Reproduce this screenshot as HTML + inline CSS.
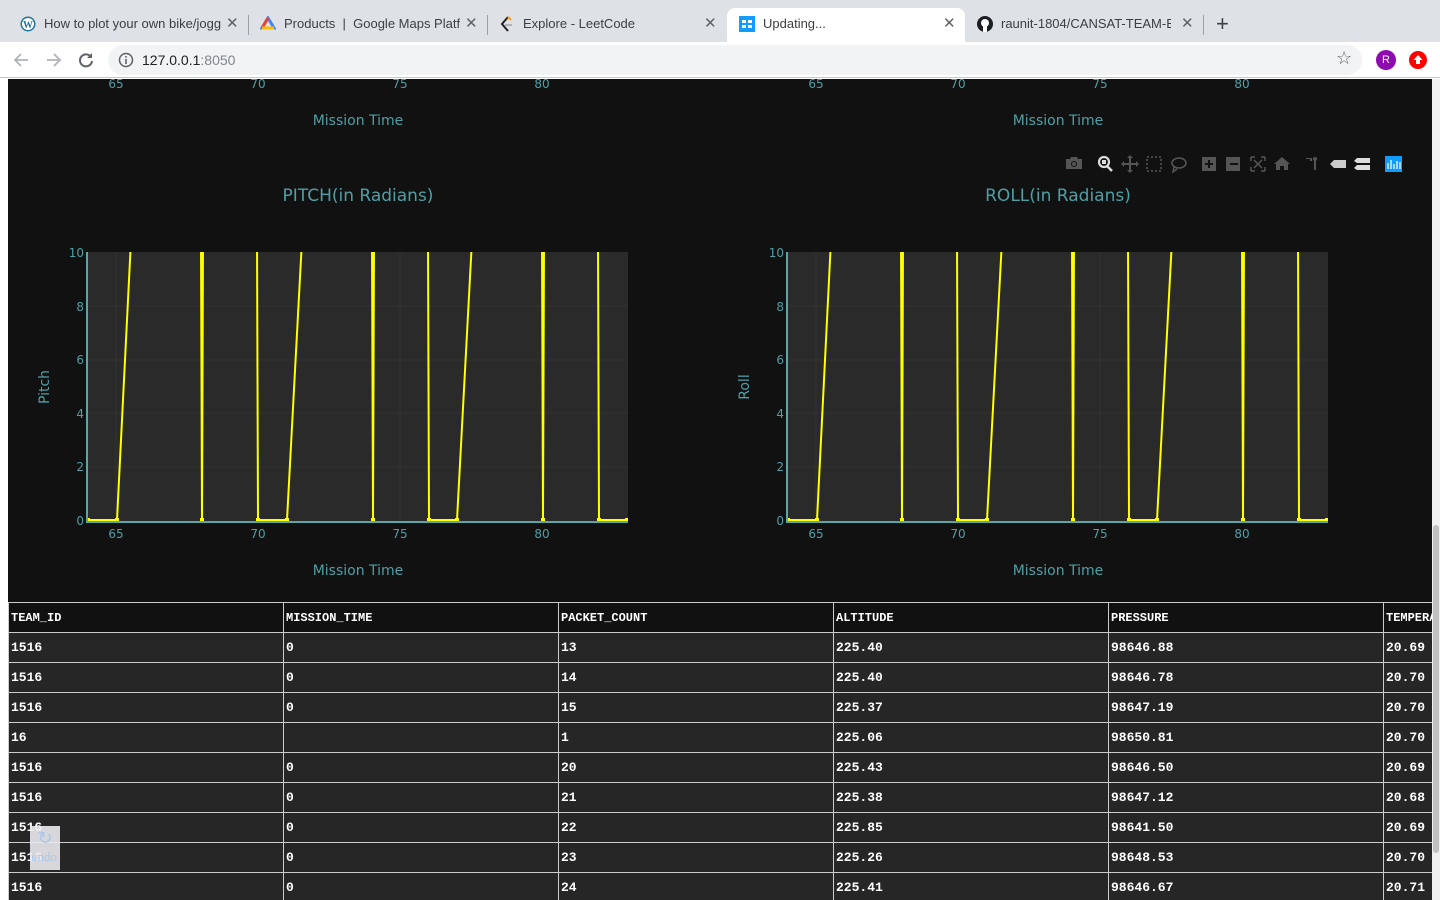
<!DOCTYPE html>
<html><head><meta charset="utf-8"><style>
*{margin:0;padding:0;box-sizing:border-box}
body{width:1440px;height:900px;overflow:hidden;background:#fff;font-family:"Liberation Sans",sans-serif;position:relative}
.tabs{position:absolute;left:0;top:0;width:1440px;height:42px;background:#dee1e6}
.tab{position:absolute;top:8px;height:34px;font-size:13px;color:#3c4043;line-height:32px}
.tab .ic{position:absolute;left:12px;top:8px;width:16px;height:16px}
.tab .t{position:absolute;left:36px;top:0;white-space:nowrap;overflow:hidden}
.tab .x{position:absolute;top:0;font-size:15px;color:#5f6368}
.sep{position:absolute;top:15px;width:1px;height:20px;background:#9aa0a6}
.active{background:#fff;border-radius:8px 8px 0 0}
.nav{position:absolute;top:42px;left:0;width:1440px;height:36px;background:#fff;border-bottom:1px solid #c8c8c8}
.omni{position:absolute;left:108px;top:3px;width:1254px;height:30px;border-radius:15px;background:#f1f3f4}
.main{position:absolute;left:8px;top:79px;width:1424px;height:821px;background:#111}
.sb{position:absolute;left:1432px;top:79px;width:8px;height:821px;background:#f1f1f1}
.thumb{position:absolute;left:1433px;top:525px;width:6px;height:328px;background:#c1c1c1;border-radius:3px}
.tw{position:absolute;left:8px;top:602px;width:1424px;height:298px;overflow:hidden}
table{border-collapse:collapse;font-family:"Liberation Mono",monospace;font-weight:bold;font-size:13px;color:#fff;table-layout:fixed;width:1650px}
td{width:275px;height:30px;border:1px solid #ccc;padding:0 2px;background:#262626;white-space:nowrap;overflow:hidden;vertical-align:middle}
tr.h td{background:#111;font-size:12px}
</style></head><body>
<div class="tabs">
 <div class="tab" style="left:8px;width:240px">
  <svg class="ic" viewBox="0 0 16 16"><circle cx="8" cy="8" r="7.5" fill="#21759b"/><circle cx="8" cy="8" r="6" fill="#fff"/><text x="8" y="12" font-size="10" font-weight="bold" text-anchor="middle" fill="#21759b" font-family="Liberation Serif">W</text></svg>
  <span class="t" style="width:178px">How to plot your own bike/jogg</span><span class="x" style="left:218px">✕</span></div>
 <div class="sep" style="left:248px"></div>
 <div class="tab" style="left:248px;width:240px">
  <svg class="ic" viewBox="0 0 16 16"><path d="M8 2 L14 12 H2 Z" fill="none" stroke="#4285f4" stroke-width="3"/><path d="M8 2 L2 12" stroke="#ea4335" stroke-width="3"/><path d="M2 12 H14" stroke="#fbbc04" stroke-width="3"/></svg>
  <span class="t" style="width:176px">Products &nbsp;|&nbsp; Google Maps Platfo</span><span class="x" style="left:217px">✕</span></div>
 <div class="sep" style="left:487px"></div>
 <div class="tab" style="left:487px;width:240px">
  <svg class="ic" viewBox="0 0 16 16"><path d="M9 1 L3 8 L9 15" fill="none" stroke="#222" stroke-width="2"/><path d="M6 9 H13" stroke="#b3b3b3" stroke-width="2"/><path d="M9 1 L12 4" stroke="#f89f1b" stroke-width="2"/></svg>
  <span class="t">Explore - LeetCode</span><span class="x" style="left:217px">✕</span></div>
 <div class="tab active" style="left:727px;width:238px">
  <svg class="ic" viewBox="0 0 16 16"><rect width="16" height="16" fill="#119dff"/><rect x="3" y="4" width="4" height="3" fill="#fff"/><rect x="9" y="4" width="4" height="3" fill="#fff"/><rect x="3" y="9" width="4" height="3" fill="#fff"/><rect x="9" y="9" width="4" height="3" fill="#fff"/></svg>
  <span class="t">Updating...</span><span class="x" style="left:216px">✕</span></div>
 <div class="tab" style="left:965px;width:240px">
  <svg class="ic" viewBox="0 0 16 16"><circle cx="8" cy="8" r="8" fill="#1b1f23"/><circle cx="8" cy="7" r="4" fill="#fff"/><rect x="6" y="10" width="4" height="6" fill="#fff"/></svg>
  <span class="t" style="width:170px">raunit-1804/CANSAT-TEAM-B.</span><span class="x" style="left:216px">✕</span></div>
 <div class="sep" style="left:1203px"></div>
 <div style="position:absolute;left:1216px;top:12px;font-size:22px;color:#3c4043;line-height:24px">+</div>
</div>
<div class="nav">
 <svg style="position:absolute;left:12px;top:9px" width="18" height="18" viewBox="0 0 18 18"><path d="M16 9H3M9 3L3 9L9 15" fill="none" stroke="#b0b3b8" stroke-width="1.8"/></svg>
 <svg style="position:absolute;left:45px;top:9px" width="18" height="18" viewBox="0 0 18 18"><path d="M2 9H15M9 3L15 9L9 15" fill="none" stroke="#b0b3b8" stroke-width="1.8"/></svg>
 <svg style="position:absolute;left:77px;top:9px" width="18" height="18" viewBox="0 0 18 18"><path d="M14 6A6 6 0 1 0 15 10" fill="none" stroke="#5f6368" stroke-width="2"/><path d="M15 2V7H10Z" fill="#5f6368"/></svg>
 <div class="omni">
  <svg style="position:absolute;left:10px;top:7px" width="16" height="16" viewBox="0 0 16 16"><circle cx="8" cy="8" r="6.5" fill="none" stroke="#5f6368" stroke-width="1.5"/><rect x="7.2" y="7" width="1.6" height="5" fill="#5f6368"/><rect x="7.2" y="4" width="1.6" height="1.6" fill="#5f6368"/></svg>
  <span style="position:absolute;left:34px;top:7px;font-size:14px;color:#202124">127.0.0.1<span style="color:#80868b">:8050</span></span>
  <span style="position:absolute;left:1228px;top:3px;font-size:18px;color:#5f6368">☆</span>
 </div>
 <div style="position:absolute;left:1376px;top:8px;width:20px;height:20px;border-radius:10px;background:#8e0bb1;color:#fff;font-size:11px;text-align:center;line-height:20px">R</div>
 <div style="position:absolute;left:1409px;top:9px;width:18px;height:18px;border-radius:9px;background:#f00"><svg width="18" height="18" viewBox="0 0 18 18"><path d="M9 4L13.5 9H11V13H7V9H4.5Z" fill="#fff"/></svg></div>
</div>
<div class="main"></div>
<svg style="position:absolute;left:0;top:79px" width="1432" height="523" viewBox="0 79 1432 523" font-family="DejaVu Sans, sans-serif">
 <defs><clipPath id="cl"><rect x="87" y="252" width="541" height="270"/></clipPath><clipPath id="cr"><rect x="787" y="252" width="541" height="270"/></clipPath></defs>
 <g fill="#4f9fa5" font-size="12" text-anchor="middle">
  <text x="116" y="88">65</text><text x="258" y="88">70</text><text x="400" y="88">75</text><text x="542" y="88">80</text>
  <text x="816" y="88">65</text><text x="958" y="88">70</text><text x="1100" y="88">75</text><text x="1242" y="88">80</text>
  <text x="358" y="125" font-size="14">Mission Time</text><text x="1058" y="125" font-size="14">Mission Time</text>
  <text x="358" y="201" font-size="17">PITCH(in Radians)</text><text x="1058" y="201" font-size="17">ROLL(in Radians)</text>
 </g>
 <g>
  <rect x="87" y="252" width="541" height="270" fill="#2a2a2a"/>
  <g stroke="#333" stroke-width="1"><path d="M87 467H628M87 413H628M87 360H628M87 306H628M116 252V522M258 252V522M400 252V522M542 252V522"/></g>
  <g clip-path="url(#cl)"><polyline fill="none" stroke="#ffff00" stroke-width="2" points="88,520 117,520 131,240 201,240 202,520 203,240 257,240 258,520 287,520 302,240 372,240 373,520 374,240 428,240 429,520 457,520 472,240 542,240 543,520 544,240 598,240 599,520 628,520"/>
  <g fill="#ffff00"><rect x="86" y="518" width="4" height="4"/><rect x="115" y="518" width="4" height="4"/><rect x="200" y="518" width="4" height="4"/><rect x="256" y="518" width="4" height="4"/><rect x="285" y="518" width="4" height="4"/><rect x="371" y="518" width="4" height="4"/><rect x="427" y="518" width="4" height="4"/><rect x="455" y="518" width="4" height="4"/><rect x="541" y="518" width="4" height="4"/><rect x="597" y="518" width="4" height="4"/><rect x="625" y="518" width="4" height="4"/></g></g>
  <path d="M87 252V522H628" fill="none" stroke="#5aa5a5" stroke-width="2"/>
  <g fill="#4f9fa5" font-size="12" text-anchor="end"><text x="84" y="525">0</text><text x="84" y="471">2</text><text x="84" y="418">4</text><text x="84" y="364">6</text><text x="84" y="311">8</text><text x="84" y="257">10</text></g>
  <g fill="#4f9fa5" font-size="12" text-anchor="middle"><text x="116" y="538">65</text><text x="258" y="538">70</text><text x="400" y="538">75</text><text x="542" y="538">80</text><text x="358" y="575" font-size="14">Mission Time</text></g>
  <text x="49" y="387" fill="#4f9fa5" font-size="14" text-anchor="middle" transform="rotate(-90 49 387)">Pitch</text>
 </g>
 <g>
  <rect x="787" y="252" width="541" height="270" fill="#2a2a2a"/>
  <g stroke="#333" stroke-width="1"><path d="M787 467H1328M787 413H1328M787 360H1328M787 306H1328M816 252V522M958 252V522M1100 252V522M1242 252V522"/></g>
  <g clip-path="url(#cr)"><polyline transform="translate(700 0)" fill="none" stroke="#ffff00" stroke-width="2" points="88,520 117,520 131,240 201,240 202,520 203,240 257,240 258,520 287,520 302,240 372,240 373,520 374,240 428,240 429,520 457,520 472,240 542,240 543,520 544,240 598,240 599,520 628,520"/>
  <g fill="#ffff00" transform="translate(700 0)"><rect x="86" y="518" width="4" height="4"/><rect x="115" y="518" width="4" height="4"/><rect x="200" y="518" width="4" height="4"/><rect x="256" y="518" width="4" height="4"/><rect x="285" y="518" width="4" height="4"/><rect x="371" y="518" width="4" height="4"/><rect x="427" y="518" width="4" height="4"/><rect x="455" y="518" width="4" height="4"/><rect x="541" y="518" width="4" height="4"/><rect x="597" y="518" width="4" height="4"/><rect x="625" y="518" width="4" height="4"/></g></g>
  <path d="M787 252V522H1328" fill="none" stroke="#5aa5a5" stroke-width="2"/>
  <g fill="#4f9fa5" font-size="12" text-anchor="end"><text x="784" y="525">0</text><text x="784" y="471">2</text><text x="784" y="418">4</text><text x="784" y="364">6</text><text x="784" y="311">8</text><text x="784" y="257">10</text></g>
  <g fill="#4f9fa5" font-size="12" text-anchor="middle"><text x="816" y="538">65</text><text x="958" y="538">70</text><text x="1100" y="538">75</text><text x="1242" y="538">80</text><text x="1058" y="575" font-size="14">Mission Time</text></g>
  <text x="749" y="387" fill="#4f9fa5" font-size="14" text-anchor="middle" transform="rotate(-90 749 387)">Roll</text>
 </g>
 <g fill="#555">
  <path d="M1066 159h4l1-2h6l1 2h4v10h-16z"/><circle cx="1074" cy="164" r="3" fill="#111"/><circle cx="1074" cy="164" r="2"/>
  <circle cx="1104" cy="162" r="5" fill="none" stroke="#ddd" stroke-width="2.2"/><rect x="1102" y="160" width="4" height="4" fill="#ddd"/><path d="M1107 166l5 5" stroke="#ddd" stroke-width="2.5"/>
  <path d="M1130 156v16M1122 164h16" stroke="#555" stroke-width="2"/><path d="M1130 155l-3 3h6zM1130 173l-3-3h6zM1121 164l3-3v6zM1139 164l-3-3v6z"/>
  <rect x="1147" y="157" width="14" height="14" fill="none" stroke="#555" stroke-width="1.6" stroke-dasharray="2 2"/>
  <ellipse cx="1179" cy="163" rx="7" ry="5" fill="none" stroke="#555" stroke-width="1.6"/><path d="M1174 167l-1 5 4-3" fill="none" stroke="#555" stroke-width="1.5"/>
  <rect x="1202" y="157" width="14" height="14"/><path d="M1209 160v8M1205 164h8" stroke="#111" stroke-width="2"/>
  <rect x="1226" y="157" width="14" height="14"/><path d="M1230 164h8" stroke="#111" stroke-width="2"/>
  <path d="M1251 157h4M1251 157v4M1265 157h-4M1265 157v4M1251 171h4M1251 171v-4M1265 171h-4M1265 171v-4M1254 160l8 8M1262 160l-8 8" stroke="#555" stroke-width="1.5" fill="none"/>
  <path d="M1274 164l8-7 8 7h-2v6h-4v-4h-4v4h-4v-6z"/>
  <path d="M1306 158h6v3h-2v-2h-4z"/><circle cx="1315" cy="159" r="2"/><rect x="1314" y="161" width="2" height="9"/>
  <path d="M1330 164l4-4h12v8h-12z" fill="#ccc"/>
  <path d="M1354 161l3-3h13v5h-13zM1354 168l3-3h13v5h-13z" fill="#ddd"/>
  <rect x="1385" y="156" width="17" height="16" fill="#119dff"/><path d="M1388 163v6M1391 160v9M1394 164v5M1397 161v8M1400 162v7" stroke="#fff" stroke-width="1.2"/>
 </g>
</svg>
<div class="tw"><table>
<tr class="h"><td>TEAM_ID</td><td>MISSION_TIME</td><td>PACKET_COUNT</td><td>ALTITUDE</td><td>PRESSURE</td><td>TEMPERATURE</td></tr>
<tr><td>1516</td><td>0</td><td>13</td><td>225.40</td><td>98646.88</td><td>20.69</td></tr>
<tr><td>1516</td><td>0</td><td>14</td><td>225.40</td><td>98646.78</td><td>20.70</td></tr>
<tr><td>1516</td><td>0</td><td>15</td><td>225.37</td><td>98647.19</td><td>20.70</td></tr>
<tr><td>16</td><td></td><td>1</td><td>225.06</td><td>98650.81</td><td>20.70</td></tr>
<tr><td>1516</td><td>0</td><td>20</td><td>225.43</td><td>98646.50</td><td>20.69</td></tr>
<tr><td>1516</td><td>0</td><td>21</td><td>225.38</td><td>98647.12</td><td>20.68</td></tr>
<tr><td>1516</td><td>0</td><td>22</td><td>225.85</td><td>98641.50</td><td>20.69</td></tr>
<tr><td>1516</td><td>0</td><td>23</td><td>225.26</td><td>98648.53</td><td>20.70</td></tr>
<tr><td>1516</td><td>0</td><td>24</td><td>225.41</td><td>98646.67</td><td>20.71</td></tr>
</table></div>
<div style="position:absolute;left:30px;top:826px;width:30px;height:44px;background:rgba(235,235,240,0.9);text-align:center;font-family:'Liberation Serif',serif;color:#a9c7e8">
 <div style="font-size:18px;line-height:24px">↻</div><div style="font-size:13px;line-height:14px;margin-left:-2px">undo</div></div>
<div class="sb"></div><div class="thumb"></div>
</body></html>
